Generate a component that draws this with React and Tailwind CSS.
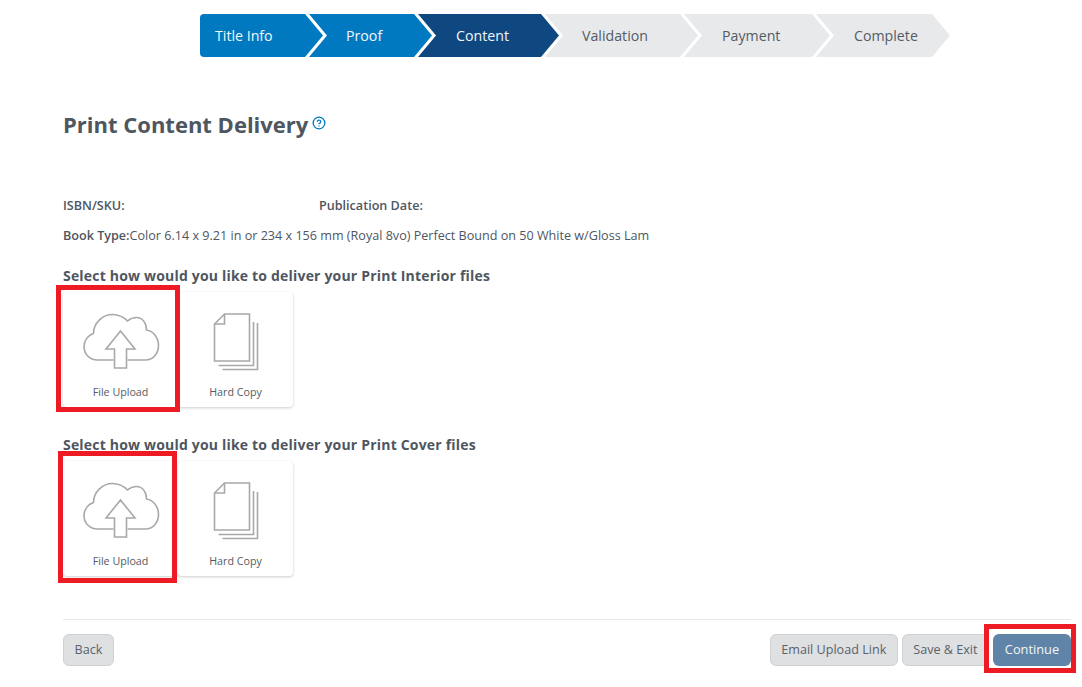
import React from "react";
import { CircleHelp } from "lucide-react";

const STEPS = [
    { label: "Title Info", width: "w-[123px]", pad: "pl-[15px]", tone: "bg-[#0079c1] text-[#f2f7fb] rounded-l-[4px]" },
    { label: "Proof", width: "w-[123px]", pad: "pl-[37px]", tone: "bg-[#0079c1] text-[#f2f7fb]" },
    { label: "Content", width: "w-[141px]", pad: "pl-[38px]", tone: "bg-[#0f4880] text-[#f2f7fb]" },
    { label: "Validation", width: "w-[153px]", pad: "pl-[37px]", tone: "bg-[#e8e9eb] text-[#525c66]" },
    { label: "Payment", width: "w-[146px]", pad: "pl-[38px]", tone: "bg-[#e8e9eb] text-[#525c66]" },
    { label: "Complete", width: "w-[134px]", pad: "pl-[38px]", tone: "bg-[#e8e9eb] text-[#525c66]" },
];

const Stepper = () => (
    <div className="flex ml-[200px] pt-[14px]">
        {STEPS.map(({ label, width, pad, tone }, i) => (
            <div
                key={label}
                className={`h-[43px] flex items-center text-[14.2px] ${width} ${pad} ${tone} ${i > 0 ? "-ml-[14px]" : ""} ${
                    i === 0
                        ? "[clip-path:polygon(0_0,calc(100%-18px)_0,100%_50%,calc(100%-18px)_100%,0_100%)]"
                        : "[clip-path:polygon(0_0,calc(100%-18px)_0,100%_50%,calc(100%-18px)_100%,0_100%,18px_50%)]"
                }`}
            >
                {label}
            </div>
        ))}
    </div>
);

const CloudIcon = () => (
    <svg width="80" height="60" viewBox="80.5 312 80 60" fill="none" stroke="#a8a8a8" strokeWidth="1.6" className="block">
        <path d="M113 360 H97 C89 360 83.5 354 83.5 346.5 C83.5 340 88 335 93 333.5 C93 323 102 314.5 112 314.5 C118 314.5 123 317 127 321 C130 318.5 133 317.5 136 317.5 C142 317.5 146 323 146 330 C153 331 158 338 158 345.5 C158 354 152 360 145 360 H127" />
        <path d="M120 331 L105.5 349 H114 V368 H126 V349 H134.5 Z" />
    </svg>
);

const PagesIcon = () => (
    <svg width="48" height="60" viewBox="211.5 312 48 60" fill="none" stroke="#a8a8a8" strokeWidth="1.6" className="block">
        <path d="M224 314 H249 V361 H214 V324 Z" />
        <path d="M224 314 V324 H214" />
        <path d="M253 322 V365.5 H218" />
        <path d="M257 323 V369.5 H222" />
    </svg>
);

const DeliveryCard = ({ label, children }) => (
    <div className="w-[115px] h-[115px] bg-white rounded-[4px] shadow-[0_1px_3px_rgba(0,0,0,0.2)] flex flex-col items-center pt-[20px]">
        <div className="h-[60px] flex items-center">{children}</div>
        <div className="mt-[13px] text-[10.7px] leading-[14px] text-[#555b62]">{label}</div>
    </div>
);

const RedBox = ({ className }) => (
    <div className={`absolute border-[5px] border-[#ed1c24] pointer-events-none ${className}`} />
);

const DeliverySection = ({ title, className, boxClass }) => (
    <div className={className}>
        <h2 className="text-[14px] leading-[20px] font-bold tracking-[0.19px] text-[#4e565f]">{title}</h2>
        <div className="flex mt-[6px] relative w-fit">
            <DeliveryCard label="File Upload"><CloudIcon /></DeliveryCard>
            <DeliveryCard label="Hard Copy"><PagesIcon /></DeliveryCard>
            <RedBox className={boxClass} />
        </div>
    </div>
);

const GreyButton = ({ children }) => (
    <button
        type="button"
        className="h-[32px] px-[10.5px] rounded-[6px] bg-[#dfe0e2] border border-[#cfd1d3] text-[12.6px] text-[#59626b]"
    >
        {children}
    </button>
);

export default function App() {
    return (
        <div className="w-[1082px] h-[687px] bg-white overflow-hidden font-['Open_Sans',sans-serif]">
            <Stepper />
            <div className="pl-[63px] pr-[11px]">
                <div className="flex items-start mt-[51px]">
                    <h1 className="text-[22px] leading-[32px] font-bold text-[#4e565f]">Print Content Delivery</h1>
                    <CircleHelp size={14} strokeWidth={2.25} className="text-[#0079c1] ml-[4px] mt-[8px]" />
                </div>
                <div className="flex mt-[57px] text-[12.6px] leading-[18px] font-semibold text-[#4e565f]">
                    <span className="w-[256px]">ISBN/SKU:</span>
                    <span>Publication Date:</span>
                </div>
                <p className="mt-[12px] text-[12.6px] leading-[18px] text-[#4e565f]">
                    <span className="font-semibold">Book Type:</span>
                    Color 6.14 x 9.21 in or 234 x 156 mm (Royal 8vo) Perfect Bound on 50 White w/Gloss Lam
                </p>
                <DeliverySection
                    title="Select how would you like to deliver your Print Interior files"
                    className="mt-[21px]"
                    boxClass="left-[-7px] top-[-7px] w-[124px] h-[127px]"
                />
                <DeliverySection
                    title="Select how would you like to deliver your Print Cover files"
                    className="mt-[28px]"
                    boxClass="left-[-5px] top-[-10px] w-[119px] h-[132px]"
                />
                <div className="mt-[43px] border-t border-[#e8e9eb] pt-[14px] flex items-center">
                    <GreyButton>Back</GreyButton>
                    <div className="ml-auto flex gap-[4px] items-center">
                        <GreyButton>Email Upload Link</GreyButton>
                        <GreyButton>Save &amp; Exit</GreyButton>
                        <div className="relative">
                            <button
                                type="button"
                                className="w-[78px] h-[32px] rounded-[6px] bg-[#5f84a8] text-[12.8px] font-medium text-[#f4f6f8]"
                            >
                                Continue
                            </button>
                            <RedBox className="left-[-9px] top-[-10px] w-[92px] h-[49px]" />
                        </div>
                    </div>
                </div>
            </div>
        </div>
    );
}
